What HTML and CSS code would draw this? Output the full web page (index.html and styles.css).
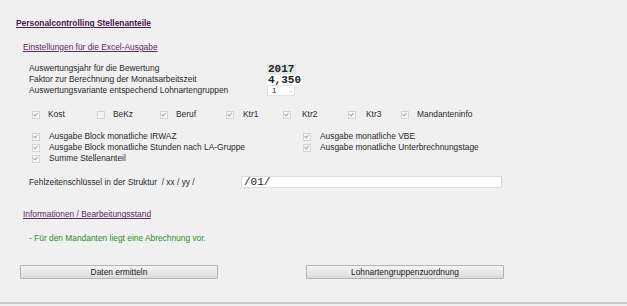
FILE: index.html
```html
<!DOCTYPE html>
<html lang="de">
<head>
<meta charset="UTF-8">
<title>Personalcontrolling Stellenanteile</title>
<link rel="stylesheet" href="styles.css">
</head>
<body>
<div class="page">
  <h1 class="title">Personalcontrolling Stellenanteile</h1>

  <h2 class="section">Einstellungen für die Excel-Ausgabe</h2>

  <table class="params">
    <tr>
      <td class="label">Auswertungsjahr für die Bewertung</td>
      <td><span class="value year">2017</span></td>
    </tr>
    <tr>
      <td class="label">Faktor zur Berechnung der Monatsarbeitszeit</td>
      <td><span class="value">4,350</span></td>
    </tr>
    <tr>
      <td class="label">Auswertungsvariante entspechend Lohnartengruppen</td>
      <td><span class="select">1<span class="arrow">-</span></span></td>
    </tr>
  </table>

  <div class="keys">
    <span class="cb on"></span><span>Kost</span>
    <span class="cb"></span><span>BeKz</span>
    <span class="cb on"></span><span>Beruf</span>
    <span class="cb on"></span><span>Ktr1</span>
    <span class="cb on"></span><span>Ktr2</span>
    <span class="cb on"></span><span>Ktr3</span>
    <span class="cb on"></span><span>Mandanteninfo</span>
  </div>

  <div class="blocks">
    <div class="opt"><span class="cb on"></span>Ausgabe Block monatliche IRWAZ</div>
    <div class="opt"><span class="cb on"></span>Ausgabe monatliche VBE</div>
    <div class="opt"><span class="cb on"></span>Ausgabe Block monatliche Stunden nach LA-Gruppe</div>
    <div class="opt"><span class="cb on"></span>Ausgabe monatliche Unterbrechnungstage</div>
    <div class="opt"><span class="cb on"></span>Summe Stellenanteil</div>
  </div>

  <div class="struct">
    <span class="struct-label">Fehlzeitenschlüssel in der Struktur&nbsp; / xx / yy /</span>
    <input type="text" class="struct-input" value="/01/" readonly>
  </div>

  <h2 class="section info">Informationen / Bearbeitungsstand</h2>
  <p class="status">- Für den Mandanten liegt eine Abrechnung vor.</p>

  <div class="actions">
    <button class="btn">Daten ermitteln</button>
    <button class="btn">Lohnartengruppenzuordnung</button>
  </div>
</div>
</body>
</html>
```

FILE: styles.css
```css
html, body {
  margin: 0;
  background: #f0f0f0;
}
body {
  font-family: "Liberation Sans", Arial, sans-serif;
  font-size: 8.4px;
  line-height: 11px;
  color: #2a2a2a;
}
.page {
  height: 304px;
  padding-left: 16px;
  border-bottom: 2px solid #c8c8c8;
  box-sizing: border-box;
  overflow: hidden;
}
.title {
  margin: 18px 0 0;
  font-size: 8.4px;
  line-height: 11px;
  font-weight: bold;
  color: #4a1a4a;
  text-decoration: underline;
}
.section {
  margin: 13px 0 0 7px;
  font-size: 8.4px;
  line-height: 11px;
  font-weight: normal;
  color: #5a2a5a;
  text-decoration: underline;
}
.params {
  margin: 10px 0 0 13px;
  border-collapse: collapse;
}
.params td {
  padding: 0;
  height: 11px;
  line-height: 11px;
}
.params .label {
  width: 238px;
}
.value {
  display: inline-block;
  padding: 0 2px 0 1px;
  background: #fff;
  font-family: "Liberation Mono", "Courier New", monospace;
  font-size: 11px;
  font-weight: bold;
  line-height: 10px;
  color: #222;
  vertical-align: middle;
}
.value.year {
  background: #dfe6e6;
}
.select {
  display: inline-block;
  width: 22px;
  height: 9px;
  padding-left: 4px;
  background: #fff;
  border: 1px solid #e2e2e2;
  line-height: 9px;
  position: relative;
  font-size: 8px;
  vertical-align: middle;
}
.arrow {
  position: absolute;
  right: 2px;
  top: 0;
  color: #999;
}
.cb {
  display: inline-block;
  width: 6px;
  height: 6px;
  border: 1px solid #d4d4d4;
  background: #f6f6f6;
  position: relative;
}
.cb.on::after {
  content: "";
  position: absolute;
  left: 1px;
  top: 0;
  width: 2px;
  height: 3px;
  border: solid #a8a8a8;
  border-width: 0 1px 1px 0;
  transform: rotate(40deg);
}
.keys {
  display: grid;
  grid-template-columns: 16px 49px 16px 47px 16px 50px 17px 40px 19px 46px 18px 35px 16px auto;
  align-items: center;
  margin: 13px 0 0 16px;
  height: 11px;
}
.blocks {
  display: grid;
  grid-template-columns: 271px auto;
  margin: 11px 0 0 16px;
}
.opt {
  display: flex;
  align-items: center;
  height: 11px;
}
.opt .cb {
  margin-right: 9px;
}
.struct {
  display: flex;
  align-items: center;
  height: 12px;
  margin: 12px 0 0 13px;
}
.struct-label {
  width: 212px;
}
.struct-input {
  width: 261px;
  height: 12px;
  box-sizing: border-box;
  margin: 0;
  padding: 0 2px;
  border: 1px solid #dcdcdc;
  background: #fff;
  font-family: "Liberation Mono", "Courier New", monospace;
  font-size: 11px;
  color: #222;
  outline: none;
}
.info {
  margin-top: 21px;
}
.status {
  margin: 13px 0 0 13px;
  color: #2e8b2e;
}
.actions {
  display: flex;
  gap: 88px;
  margin: 21px 0 0 4px;
}
.btn {
  width: 198px;
  height: 14px;
  padding: 0;
  border: 1px solid #b4b4b4;
  border-radius: 1px;
  background: linear-gradient(#f4f4f4, #dcdcdc);
  font-family: "Liberation Sans", Arial, sans-serif;
  font-size: 8.4px;
  color: #222;
  line-height: 12px;
}
```
